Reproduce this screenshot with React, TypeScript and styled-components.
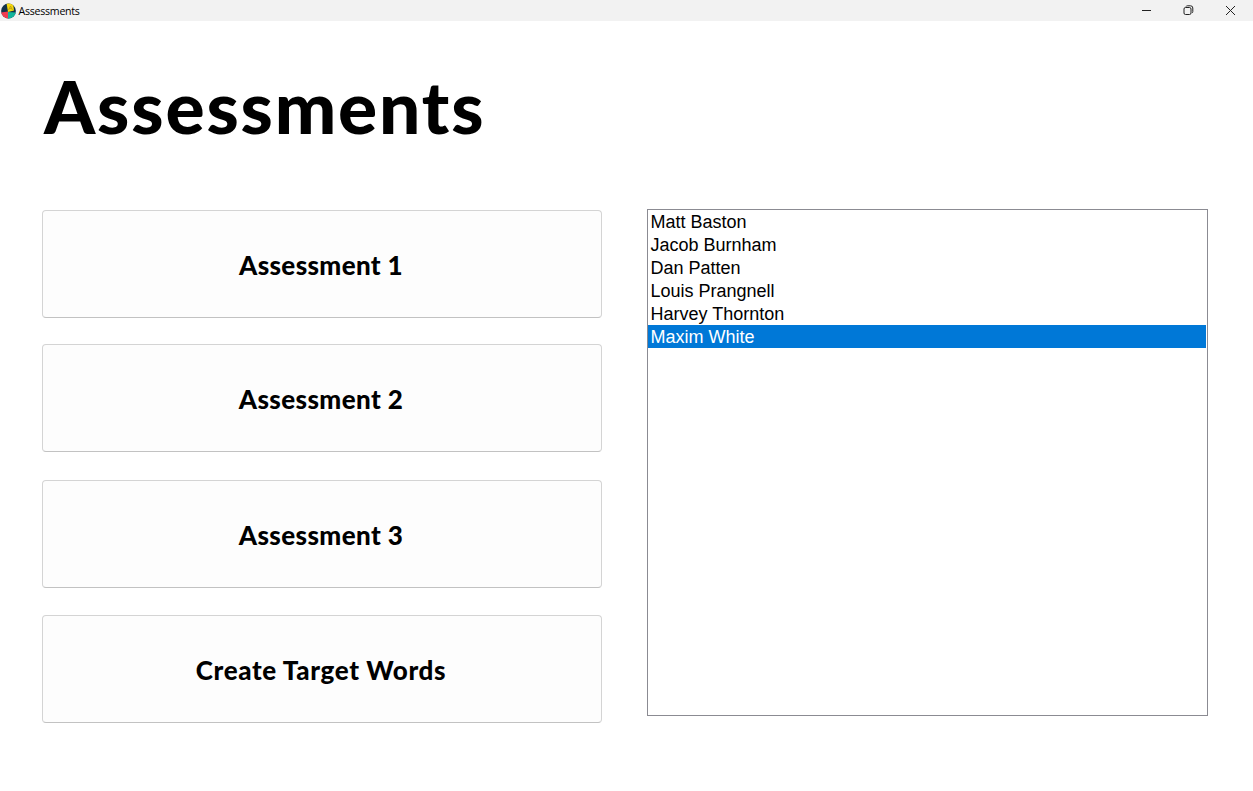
import React from 'react';
import styled, { createGlobalStyle } from 'styled-components';

const GlobalStyle = createGlobalStyle`
  * { box-sizing: border-box; }
  html, body { margin: 0; background: #fff; overflow: hidden; }
`;

const Window = styled.div`
  display: flex;
  flex-direction: column;
  width: 1253px;
  height: 791px;
  background: #fff;
  color: #000;
`;

const TitleBar = styled.header`
  display: flex;
  align-items: center;
  height: 21px;
  padding-left: 1px;
  background: #f2f2f2;
`;

const WindowTitle = styled.span`
  flex: 1;
  padding: 0 0 0 2.5px;
  font: 10.6px/18px 'Open Sans', sans-serif;
  letter-spacing: -0.25px;
`;

const WindowButton = styled.button`
  display: flex;
  align-items: center;
  justify-content: center;
  width: 42px;
  height: 21px;
  padding: 0;
  border: 0;
  background: none;
`;

const WindowButtons = styled.div`
  display: flex;
  margin-right: 2px;
`;

const Heading = styled.h1`
  margin: 0;
  padding: 41px 0 0 44px;
  height: 188px;
  font: 900 73px/88px Lato, sans-serif;
  letter-spacing: 1.85px;
`;

const Columns = styled.main`
  display: flex;
  gap: 45px;
  padding-left: 42px;
`;

const ButtonColumn = styled.div`
  display: grid;
  grid-template-rows: 134px 136px 135px 108px;
  align-items: start;
  width: 560px;
  padding-top: 1px;
`;

const ActionButton = styled.button<{ $spacing: number }>`
  height: 108px;
  padding: 1px 2px 0 0;
  border: 1px solid #d4d4d4;
  border-bottom-color: #c2c2c2;
  border-radius: 4px;
  background: #fdfdfd;
  color: #000;
  font: 900 26px/32px Lato, sans-serif;
  letter-spacing: ${({ $spacing }) => $spacing}px;
`;

const NameList = styled.ul`
  width: 561px;
  height: 507px;
  margin: 0;
  padding: 0 1px 0 0;
  border: 1px solid #8b8b92;
  list-style: none;
`;

const NameItem = styled.li<{ $selected: boolean }>`
  height: 23px;
  padding-left: 2.5px;
  background: ${({ $selected }) => ($selected ? '#0078d7' : 'transparent')};
  color: ${({ $selected }) => ($selected ? '#fff' : '#000')};
  font: 18px/25px 'Liberation Sans', Arial, sans-serif;
`;

const AppIcon = () => (
  <svg width="15" height="16" viewBox="0 0 15 16">
    <defs>
      <clipPath id="disc"><circle cx="7.5" cy="8" r="7.4" /></clipPath>
    </defs>
    <g clipPath="url(#disc)">
      <rect width="15" height="16" fill="#12324a" />
      <path d="M5.5 0h6.5l1 7.5-6 1.5z" fill="#f5d80e" />
      <path d="M0 9.5l7-1v8H0z" fill="#f23c50" />
      <path d="M7 9l8 .5v7H7z" fill="#12b59c" />
      <path d="M7.5 7l2-4 2 4M8.3 5.6h2.4" fill="none" stroke="#b99b13" strokeWidth=".8" />
    </g>
  </svg>
);

const glyph = { fill: 'none', stroke: '#222', strokeWidth: 1 };

const actions = [
  { label: 'Assessment 1', spacing: 0.35 },
  { label: 'Assessment 2', spacing: 0.4 },
  { label: 'Assessment 3', spacing: 0.4 },
  { label: 'Create Target Words', spacing: 0.62 },
];

const names = ['Matt Baston', 'Jacob Burnham', 'Dan Patten', 'Louis Prangnell', 'Harvey Thornton', 'Maxim White'];

export default function App() {
  return (
    <Window>
      <GlobalStyle />
      <TitleBar>
        <AppIcon />
        <WindowTitle>Assessments</WindowTitle>
        <WindowButtons>
          <WindowButton aria-label="Minimize">
            <svg width="11" height="11" {...glyph}><path d="M1 5.5h9" /></svg>
          </WindowButton>
          <WindowButton aria-label="Restore">
            <svg width="11" height="11" {...glyph}>
              <rect x="1" y="2.5" width="7" height="7" rx="1.5" />
              <path d="M3 1.5Q3.3 .8 4.3.8H7.5Q9.8.8 9.8 3V6.5Q9.8 7.6 9 8" />
            </svg>
          </WindowButton>
          <WindowButton aria-label="Close">
            <svg width="11" height="11" {...glyph}><path d="M1 1l9 9M10 1l-9 9" /></svg>
          </WindowButton>
        </WindowButtons>
      </TitleBar>
      <Heading>Assessments</Heading>
      <Columns>
        <ButtonColumn>
          {actions.map(({ label, spacing }) => (
            <ActionButton key={label} $spacing={spacing}>{label}</ActionButton>
          ))}
        </ButtonColumn>
        <NameList>
          {names.map((name) => (
            <NameItem key={name} $selected={name === 'Maxim White'}>{name}</NameItem>
          ))}
        </NameList>
      </Columns>
    </Window>
  );
}
